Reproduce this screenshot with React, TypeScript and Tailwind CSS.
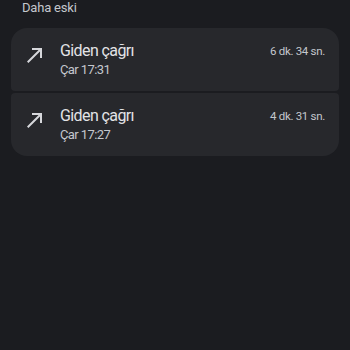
const calls = [
  { title: 'Giden çağrı', time: 'Çar 17:31', duration: '6 dk. 34 sn.' },
  { title: 'Giden çağrı', time: 'Çar 17:27', duration: '4 dk. 31 sn.' },
]

function CallMadeIcon() {
  return (
    <svg viewBox="0 0 24 24" className="h-6 w-6 shrink-0" fill="#d6d7db">
      <path d="M9 5v2h6.59L4 18.59 5.41 20 17 8.41V15h2V5z" />
    </svg>
  )
}

export default function App() {
  return (
    <div className="min-h-[350px] w-[350px] bg-[#1b1c20] font-['Roboto',sans-serif]">
      <div className="px-[22px] text-[13px] leading-[15px] tracking-[-0.2px] text-[#c4c7cc]">Daha eski</div>
      <div className="mt-[13px] flex flex-col gap-[2px] px-[11px]">
        {calls.map((c, i) => (
          <div
            key={i}
            className={
              'flex h-[63px] items-start bg-[#27282c] pl-[12px] pr-[14px] ' +
              (i === 0 ? 'rounded-t-[16px] rounded-b-[4px]' : 'rounded-b-[16px] rounded-t-[4px]')
            }
          >
            <div className="mt-[15px]">
              <CallMadeIcon />
            </div>
            <div className="ml-[13px] mt-[13px] flex flex-1 flex-col">
              <span className="text-[16px] leading-[20px] tracking-[-0.6px] text-[#e3e3e6]">{c.title}</span>
              <span className="text-[13px] leading-[17px] tracking-[-0.6px] text-[#c4c7cc]">{c.time}</span>
            </div>
            <span className="mt-[16px] text-[11.5px] leading-[14px] tracking-[-0.3px] text-[#c4c7cc]">
              {c.duration}
            </span>
          </div>
        ))}
      </div>
    </div>
  )
}
